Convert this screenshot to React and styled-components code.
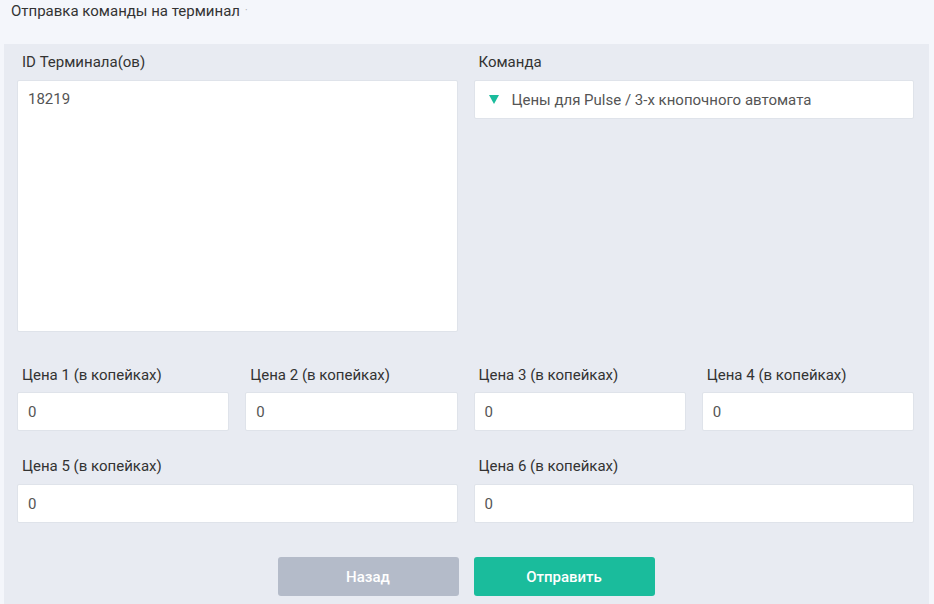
import React from "react";
import styled, { createGlobalStyle } from "styled-components";

const Global = createGlobalStyle`
  html, body { margin: 0; padding: 0; background: #f4f6fb; }
  body { font-family: Roboto, "Noto Sans", Arial, sans-serif; color: #333; }
  * { box-sizing: border-box; }
`;

const Page = styled.div`
  width: 934px;
  height: 604px;
  overflow: hidden;
  background: #f4f6fb;
`;

const Header = styled.div`
  height: 44px;
  padding: 2px 0 0 11px;
  font-size: 15px;
  line-height: 18px;
  color: #333;
  display: flex;
  align-items: flex-start;
  gap: 5px;
`;

const Dot = styled.span`
  color: #aaa;
  font-size: 10px;
`;

const Panel = styled.div`
  margin: 0 5px 0 4px;
  background: #e8ebf2;
  padding: 8px 15px 20px 13px;
  height: 560px;
`;

const Grid = styled.div`
  display: grid;
  grid-template-columns: repeat(4, 1fr);
  column-gap: 16px;
`;

const Field = styled.div`
  grid-column: span ${(p) => p.span || 1};
  display: flex;
  flex-direction: column;
  margin-bottom: ${(p) => p.mb ?? 25}px;
`;

const Label = styled.div`
  font-size: 15px;
  line-height: 20px;
  color: #333;
  padding-left: 5px;
  margin-bottom: ${(p) => p.gap ?? 8}px;
`;

const Input = styled.div`
  height: 39px;
  background: #fff;
  border: 1px solid #dfe3ea;
  border-radius: 2px;
  padding: 0 10px;
  display: flex;
  align-items: center;
  font-size: 15px;
  color: #555;
`;

const TextArea = styled.div`
  height: 252px;
  background: #fff;
  border: 1px solid #dfe3ea;
  border-radius: 2px;
  padding: 9px 10px;
  font-size: 15px;
  line-height: 18px;
  color: #555;
`;

const Select = styled(Input)`
  height: 39px;
  gap: 13px;
  padding-left: 14px;
`;

const Caret = styled.span`
  width: 0;
  height: 0;
  border-left: 5px solid transparent;
  border-right: 5px solid transparent;
  border-top: 9px solid #1abc9c;
`;

const Buttons = styled.div`
  display: flex;
  justify-content: center;
  gap: 15px;
  margin-top: 9px;
  padding-left: 1px;
`;

const Button = styled.button`
  width: 181px;
  height: 39px;
  border: none;
  border-radius: 3px;
  background: ${(p) => (p.primary ? "#1abc9c" : "#b4bbc9")};
  color: #fff;
  font-family: Roboto, "Noto Sans", Arial, sans-serif;
  font-weight: 500;
  font-size: 15px;
`;

export default function App() {
  const prices = [1, 2, 3, 4];
  return (
    <Page>
      <Global />
      <Header>
        Отправка команды на терминал <Dot>·</Dot>
      </Header>
      <Panel>
        <Grid>
          <Field span={2} mb={33}>
            <Label>ID Терминала(ов)</Label>
            <TextArea>18219</TextArea>
          </Field>
          <Field span={2} mb={33}>
            <Label>Команда</Label>
            <Select>
              <Caret />
              Цены для Pulse / 3-х кнопочного автомата
            </Select>
          </Field>
          {prices.map((n) => (
            <Field key={n}>
              <Label gap={7}>Цена {n} (в копейках)</Label>
              <Input>0</Input>
            </Field>
          ))}
          <Field span={2}>
            <Label>Цена 5 (в копейках)</Label>
            <Input>0</Input>
          </Field>
          <Field span={2}>
            <Label>Цена 6 (в копейках)</Label>
            <Input>0</Input>
          </Field>
        </Grid>
        <Buttons>
          <Button>Назад</Button>
          <Button primary>Отправить</Button>
        </Buttons>
      </Panel>
    </Page>
  );
}
